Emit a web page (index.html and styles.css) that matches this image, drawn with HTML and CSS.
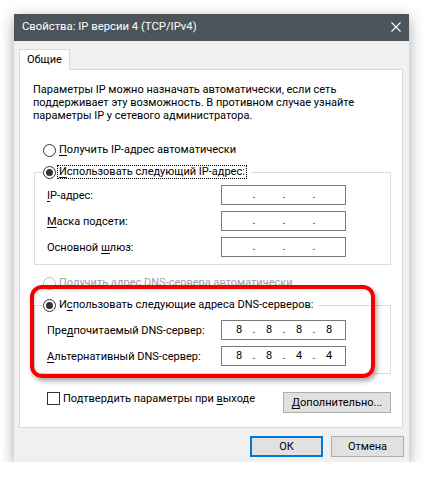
FILE: index.html
```html
<!DOCTYPE html>
<html lang="ru">
<head>
<meta charset="utf-8">
<title>Свойства: IP версии 4 (TCP/IPv4)</title>
<link rel="stylesheet" href="styles.css">
</head>
<body>
<div class="window">
  <div class="titlebar">
    <span class="title">Свойства: IP версии 4 (TCP/IPv4)</span>
    <svg class="close" width="10" height="10" viewBox="0 0 10 10"><path d="M0.5 0.5L9.5 9.5M9.5 0.5L0.5 9.5" stroke="#fff" stroke-width="1.1" fill="none"/></svg>
  </div>
  <div class="client">
    <div class="tabs"><div class="tab">Общие</div></div>
    <div class="panel">
      <p class="desc">Параметры IP можно назначать автоматически, если сеть<br>поддерживает эту возможность. В противном случае узнайте<br>параметры IP у сетевого администратора.</p>

      <div class="radio-row r1"><span class="radio"></span><span class="label"><u>П</u>олучить IP-адрес автоматически</span></div>

      <fieldset class="group g1">
        <legend class="radio-row"><span class="radio checked"></span><span class="label focus"><u>И</u>спользовать следующий IP-адрес:</span></legend>
        <div class="field"><span class="flabel"><u>I</u>P-адрес:</span><span class="ip"><span class="oct"></span><span class="dot">.</span><span class="oct"></span><span class="dot">.</span><span class="oct"></span><span class="dot">.</span><span class="oct"></span></span></div>
        <div class="field"><span class="flabel"><u>М</u>аска подсети:</span><span class="ip"><span class="oct"></span><span class="dot">.</span><span class="oct"></span><span class="dot">.</span><span class="oct"></span><span class="dot">.</span><span class="oct"></span></span></div>
        <div class="field"><span class="flabel">Основной <u>ш</u>люз:</span><span class="ip"><span class="oct"></span><span class="dot">.</span><span class="oct"></span><span class="dot">.</span><span class="oct"></span><span class="dot">.</span><span class="oct"></span></span></div>
      </fieldset>

      <div class="radio-row r3 disabled"><span class="radio"></span><span class="label">Получить адрес DNS-сервера автоматически</span></div>

      <fieldset class="group g2">
        <legend class="radio-row"><span class="radio checked"></span><span class="label">И<u>с</u>пользовать следующие адреса DNS-серверов:</span></legend>
        <div class="field"><span class="flabel">Пре<u>д</u>почитаемый DNS-сервер:</span><span class="ip"><span class="oct">8</span><span class="dot">.</span><span class="oct">8</span><span class="dot">.</span><span class="oct">8</span><span class="dot">.</span><span class="oct">8</span></span></div>
        <div class="field"><span class="flabel"><u>А</u>льтернативный DNS-сервер:</span><span class="ip"><span class="oct">8</span><span class="dot">.</span><span class="oct">8</span><span class="dot">.</span><span class="oct">4</span><span class="dot">.</span><span class="oct">4</span></span></div>
      </fieldset>

      <div class="bottom-row">
        <div class="check-row"><span class="checkbox"></span><span class="label">Подтвердить параметры при <u>в</u>ыходе</span></div>
        <button class="btn advanced"><u>Д</u>ополнительно...</button>
      </div>

      <div class="highlight"></div>
    </div>
    <div class="dialog-buttons">
      <button class="btn default">ОК</button>
      <button class="btn">Отмена</button>
    </div>
  </div>
</div>
</body>
</html>
```
FILE: styles.css
```css
* { box-sizing: border-box; }
html, body { margin: 0; padding: 0; background: #fff; }
body {
  font-family: Roboto, "Liberation Sans", sans-serif;
  font-size: 11px;
  color: #000;
}
u { text-decoration: underline; text-underline-offset: 2px; text-decoration-thickness: 1px; }

.window {
  margin: 14px 0 0 14px;
  width: 395px;
  height: 448px;
  background: #f0f0f0;
  box-shadow: 0 4px 14px rgba(0, 0, 0, 0.35);
  display: flex;
  flex-direction: column;
}
.titlebar {
  height: 27px;
  background: #4b545a;
  color: #fff;
  display: flex;
  align-items: center;
  justify-content: space-between;
  padding: 0 8px 2px 8px;
  font-size: 11.3px;
}
.close { display: block; }

.client {
  flex: 1;
  padding: 8px 6px 0 5px;
  display: flex;
  flex-direction: column;
}
.tabs {
  display: flex;
  height: 21px;
  border-bottom: 1px solid #d9d9d9;
}
.tab {
  width: 51px;
  height: 21px;
  margin-bottom: -1px;
  border: 1px solid #d9d9d9;
  border-bottom: none;
  background: #fff;
  padding-left: 7px;
  line-height: 19px;
}
.panel {
  position: relative;
  background: #fff;
  border: 1px solid #d9d9d9;
  border-top: none;
  padding: 0 0 14px 0;
}
.desc {
  margin: 0;
  padding: 13px 0 0 13px;
  line-height: 13px;
}

.radio-row {
  display: flex;
  align-items: center;
  height: 20px;
}
.radio {
  width: 13px;
  height: 13px;
  border: 1px solid #333;
  border-radius: 50%;
  background: #fff;
  display: flex;
  align-items: center;
  justify-content: center;
  flex: none;
}
.radio.checked::after {
  content: "";
  width: 7px;
  height: 7px;
  border-radius: 50%;
  background: #333;
}
.label { margin-left: 3px; line-height: 12px; white-space: nowrap; }
.label.focus { margin-left: 2px; padding: 0 1px; outline: 1px dotted #000; }

.r1 { margin: 18px 0 0 23px; }
.r3 { margin: 8px 0 0 23px; }
.disabled .radio { border-color: #bcbcbc; }
.disabled .label { color: #a0a0a0; }

.group {
  margin: 2px 0 0 14px;
  width: 357px;
  padding: 0 0 7px 0;
  border: 1px solid #dcdcdc;
  min-width: 0;
}
.group legend {
  padding: 0 5px 0 0;
  margin-left: 8px;
}
.g1 .field:first-of-type { margin-top: 3px; }
.g2 .field:first-of-type { margin-top: 5px; }
.field {
  display: flex;
  align-items: center;
  height: 20px;
  margin: 6px 0 0 12px;
}
.flabel { width: 174px; white-space: nowrap; }
.ip {
  width: 125px;
  height: 20px;
  border: 1px solid #7a7a7a;
  display: flex;
  align-items: center;
  padding: 0 0 1px 5px;
  background: #fff;
}
.oct { width: 24px; text-align: center; }
.dot { width: 6px; text-align: center; }

.bottom-row {
  display: flex;
  justify-content: space-between;
  align-items: flex-start;
  margin: 18px 11px 0 27px;
}
.check-row { display: flex; align-items: center; height: 13px; }
.checkbox {
  width: 13px;
  height: 13px;
  border: 1px solid #333;
  background: #fff;
}

.btn {
  font: inherit;
  color: #000;
  background: #e1e1e1;
  border: 1px solid #adadad;
  height: 21px;
  width: 73px;
  padding: 0;
  margin: 0;
}
.btn.advanced { width: 108px; }
.btn.default { border: 2px solid #0078d7; }

.dialog-buttons {
  display: flex;
  justify-content: flex-end;
  gap: 8px;
  margin: 8px -1px 0 0;
}

.highlight {
  position: absolute;
  left: 10px;
  top: 215px;
  width: 345px;
  height: 93px;
  border: 4px solid #f20000;
  border-radius: 12px;
  box-shadow: 2px 3px 5px rgba(0, 0, 0, 0.35), inset 1px 1px 3px rgba(0, 0, 0, 0.15);
  pointer-events: none;
}
```
